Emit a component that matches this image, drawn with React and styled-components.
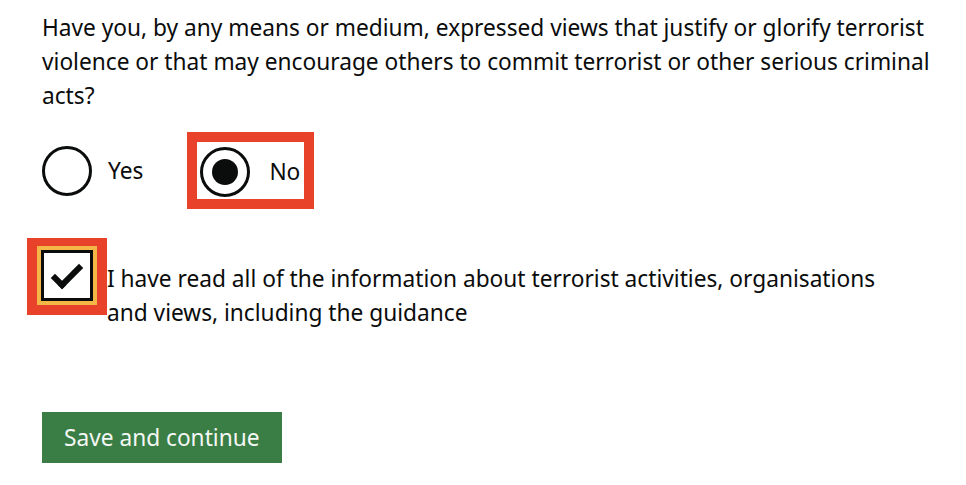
import React, { useState } from "react";
import styled, { createGlobalStyle } from "styled-components";

const GlobalStyle = createGlobalStyle`
  html, body {
    margin: 0;
    padding: 0;
    background: #ffffff;
  }
  body {
    font-family: "Noto Sans", "Open Sans", Arial, sans-serif;
    color: #0b0c0c;
  }
`;

const App = () => {
  const [answer, setAnswer] = useState("no");
  const [agreed, setAgreed] = useState(true);

  return (
    <>
      <GlobalStyle />
      <Form>
        <Question>
          Have you, by any means or medium, expressed views that justify or
          glorify terrorist violence or that may encourage others to commit
          terrorist or other serious criminal acts?
        </Question>

        <RadioGroup>
          <RadioItem onClick={() => setAnswer("yes")}>
            <Radio checked={answer === "yes"} />
            <RadioLabel>Yes</RadioLabel>
          </RadioItem>

          <Highlight>
            <RadioItem $tight onClick={() => setAnswer("no")}>
              <Radio checked={answer === "no"} />
              <RadioLabel>No</RadioLabel>
            </RadioItem>
          </Highlight>
        </RadioGroup>

        <CheckboxRow>
          <CheckHighlight>
            <FocusRing>
              <Checkbox onClick={() => setAgreed(!agreed)}>
                {agreed && <Tick />}
              </Checkbox>
            </FocusRing>
          </CheckHighlight>
          <CheckboxLabel>
            I have read all of the information about terrorist activities,
            organisations and views, including the guidance
          </CheckboxLabel>
        </CheckboxRow>

        <Button type="button">Save and continue</Button>
      </Form>
    </>
  );
};

export default App;

const Form = styled.div`
  padding: 11px 0 0 42px;
  width: 902px;
`;

const Question = styled.p`
  margin: 0;
  font-size: 22.7px;
  line-height: 34px;
`;

const RadioGroup = styled.div`
  display: flex;
  align-items: center;
  gap: 44px;
  margin-top: 19px;
`;

const RadioItem = styled.div`
  display: flex;
  align-items: center;
  gap: ${(p) => (p.$tight ? "19px" : "16px")};
  cursor: pointer;
  padding: ${(p) => (p.$tight ? "5px 4px 2px 3px" : "0")};
`;

const Radio = styled.span`
  box-sizing: border-box;
  width: 50px;
  height: 50px;
  border: 3px solid #0b0c0c;
  border-radius: 50%;
  display: flex;
  align-items: center;
  justify-content: center;

  &::after {
    content: "";
    display: ${(p) => (p.checked ? "block" : "none")};
    width: 26px;
    height: 26px;
    border-radius: 50%;
    background: #0b0c0c;
  }
`;

const RadioLabel = styled.span`
  font-size: 22.7px;
  line-height: 34px;
`;

const Highlight = styled.div`
  border: 10px solid #e8432a;
`;

const CheckboxRow = styled.div`
  display: flex;
  align-items: flex-start;
  margin: 29px 0 0 -15px;
`;

const CheckHighlight = styled.div`
  border: 10px solid #e8432a;
  border-top-width: 8px;
  flex-shrink: 0;
`;

const FocusRing = styled.div`
  border: 4px solid #f4b646;
`;

const Checkbox = styled.span`
  box-sizing: border-box;
  display: flex;
  align-items: center;
  justify-content: center;
  width: 52px;
  height: 51px;
  border: 3px solid #0b0c0c;
  background: #ffffff;
  cursor: pointer;
`;

const Tick = styled.span`
  display: block;
  width: 24px;
  height: 10px;
  margin-top: -6px;
  border-left: 6px solid #0b0c0c;
  border-bottom: 6px solid #0b0c0c;
  transform: rotate(-45deg);
`;

const CheckboxLabel = styled.span`
  font-size: 22.7px;
  line-height: 34px;
  padding-top: 24px;
  width: 790px;
`;

const Button = styled.button`
  display: block;
  margin-top: 82px;
  padding: 9px 22px 8px;
  border: 0;
  border-radius: 0;
  background: #3a7e45;
  box-shadow: 0 4px 0 #1b3e22;
  color: #f4f7f4;
  font-family: "Noto Sans", "Open Sans", Arial, sans-serif;
  font-size: 22.7px;
  line-height: 34px;
  cursor: pointer;
`;
